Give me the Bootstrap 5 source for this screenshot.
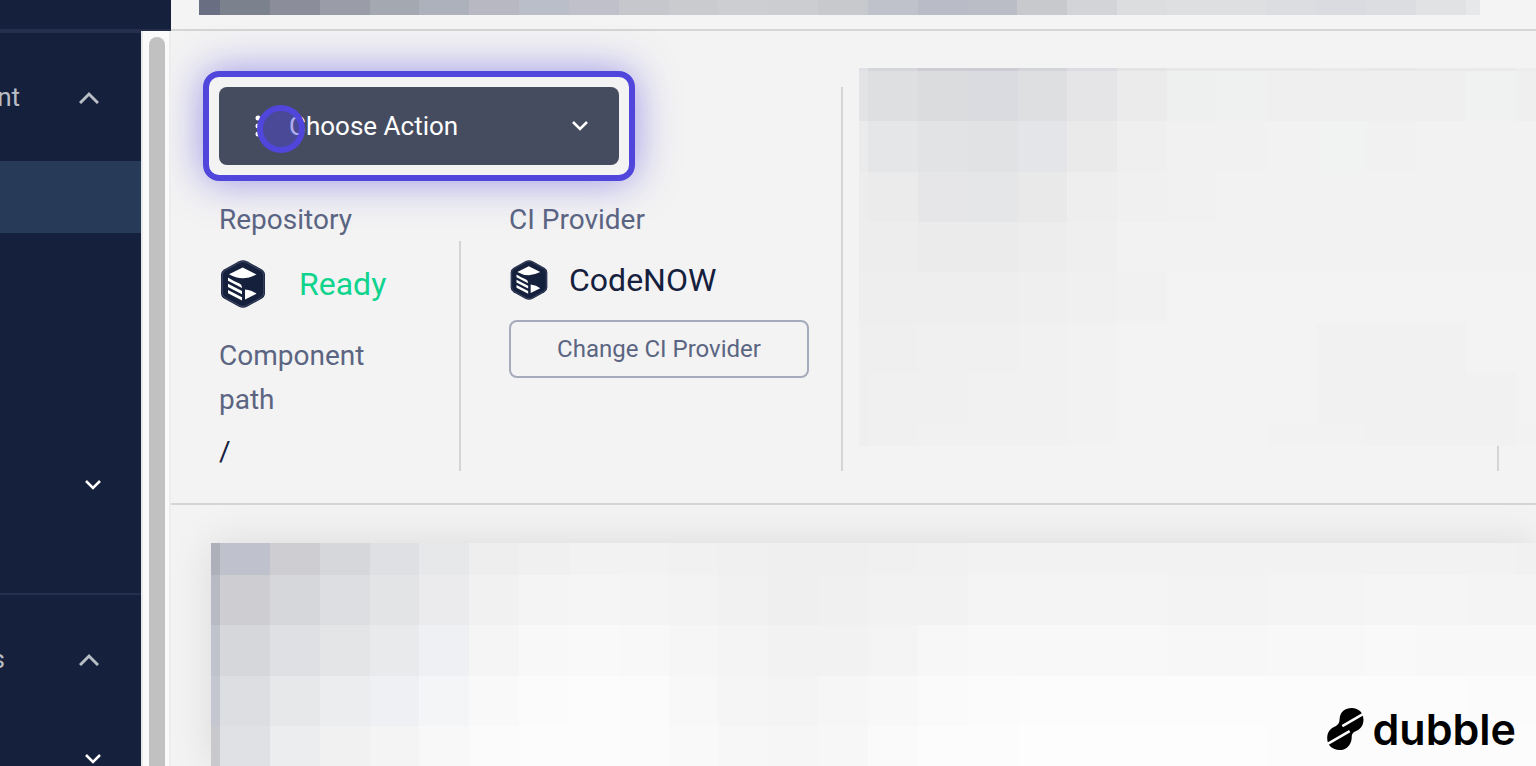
<!DOCTYPE html>
<html lang="en">
<head>
<meta charset="utf-8">
<meta name="viewport" content="width=device-width, initial-scale=1">
<title>CodeNOW component</title>
<link rel="stylesheet" href="https://cdn.jsdelivr.net/npm/bootstrap@5.3.0/dist/css/bootstrap.min.css">
<style>
:root { --navy: #15203d; --slate: #5b6582; --rule: #d4d4d4; --violet: #5046db; }
body { font-family: Roboto, "Liberation Sans", sans-serif; background: #f3f3f3; color: var(--navy); font-size: 28px; line-height: 44px; }
svg { display: block; flex: none; }

/* Sidebar */
.side { width: 171px; }
.side-head { height: 31px; background: var(--navy); border-bottom: 2px solid #252e4c; }
.side-nav { width: 141px; background: var(--navy); border-top: 2px solid #252e4c; font-size: 26px; color: #b9bec6; }
.side-nav a { height: 72px; color: #fff; padding-right: 40px; flex: none; }
.side-nav a.group { height: 128px; color: #b9bec6; padding-right: 42px; }
.side-nav a.current { background: #273b59; }
.side-nav hr { margin: 0; border-top: 2px solid #252e4c; opacity: 1; flex: none; }
.cut { width: 20px; display: flex; justify-content: flex-end; }
.cut.short { width: 5px; }
.track { width: 30px; background: #fafafa; border-left: 2px solid #e8e8e8; border-right: 2px solid #ededed; padding: 6px 4px 0 6px; }
.thumb { background: #c1c1c1; border-radius: 8px 8px 0 0; }

/* Main area */
.topbar { height: 31px; background: #f4f4f4; border-bottom: 2px solid #d4d6d4; padding: 0 56px 0 28px; }
.summary { height: 474px; border-bottom: 2px solid var(--rule); padding-left: 32px; flex: none; }
.left { width: 640px; margin-top: 40px; flex: none; }
.focus-frame { width: 432px; border: 6px solid var(--violet); border-radius: 16px; padding: 10px; box-shadow: 0 0 40px rgba(80, 70, 219, .55); }
.btn-action, .btn-action:hover { height: 78px; background: #464c5f; color: #fff; border: 0; border-radius: 8px; font-size: 26px; padding: 0 31px 0 36px; gap: 28px; }
.click-ring { top: 28px; left: 48px; width: 48px; height: 48px; border: 6px solid var(--violet); background: rgba(80, 70, 219, .45); }
.details { margin-top: 17px; padding-left: 16px; }
.field-name { color: var(--slate); }
.repo { width: 240px; }
.ci { width: 300px; margin-left: 48px; }
.v-rule { width: 2px; background: var(--rule); }
.v-rule.inner { margin-top: 43px; height: 230px; }
.v-rule.outer { margin-top: 56px; height: 384px; flex: none; margin-left: -2px; }
.value { font-size: 32px; height: 52px; }
.ci .value { height: 44px; margin-bottom: 18px; }
.ready { color: #10d48e; }
.btn-change, .btn-change:hover { height: 58px; border: 2px solid #a6abbb; border-radius: 8px; color: var(--slate); font-size: 24px; background: transparent; }
.panel { margin: 37px 0 0 16px; }
.stub { height: 25px; margin-right: 37px; border-right: 2px solid var(--rule); }

/* Redacted areas: a mosaic of flat tiles */
.mosaic { display: grid; }
.mosaic-title { grid-template-columns: 21px repeat(25, 1fr) 14px; height: 15px; }
.mosaic-panel { grid-template-columns: 9px repeat(13, 1fr) 20px; grid-template-rows: 3px 50px 51px 50px 50px 51px 50px 51px 22px; }
.mosaic-card { grid-template-columns: 9px repeat(26, 1fr) 20px; grid-template-rows: 32px 50px 51px 50px 1fr; margin: 38px 0 0 40px; box-shadow: 0 0 40px rgba(0, 0, 0, .1); }

.brand { right: 20px; bottom: 12px; color: #000; font: 600 43px/50px Inter, sans-serif; gap: 8px; }
</style>
</head>
<body class="vh-100 overflow-hidden">
<svg width="0" height="0" class="position-absolute" aria-hidden="true">
  <symbol id="cube" viewBox="0 0 44 48">
    <path d="M18 1.2Q22-.8 26 1.2L40.500 9.200Q44 11.300 44 15V33Q44 36.700 40.500 38.800L26 46.800Q22 48.800 18 46.800L3.500 38.800Q0 36.700 0 33V15Q0 11.300 3.500 9.200Z" fill="#15203d"/>
    <path d="M18.500 2.400Q22 .6 25.500 2.400L39.500 10.200Q42.800 12 42.800 15.500V32.500Q42.800 36 39.500 37.800L25.500 45.600Q22 47.400 18.500 45.600L4.500 37.800Q1.200 36 1.200 32.500V15.500Q1.200 12 4.500 10.200Z" fill="none" stroke="#6d7690" stroke-width=".5"/>
    <path d="M8 14.300 21.700 7.500 35.500 14.500Q28 18.300 21.700 18.300 15 18.300 8 14.300ZM7 17.500Q13 21.500 18 23.200 21 24.500 21 28L7 20.800ZM7 23.700 21 31V34.200L7 27ZM7 30 21 37.200V40.600L7 33.300ZM24 29.400Q31 30 35.500 33.800L24 39.600Z" fill="#fff"/>
  </symbol>
</svg>

<div class="d-flex h-100">
  <aside class="side d-flex flex-column flex-shrink-0">
    <div class="side-head flex-shrink-0"></div>
    <div class="d-flex flex-grow-1 overflow-hidden">
      <nav class="side-nav d-flex flex-column overflow-hidden" aria-label="Main">
        <a href="#" class="group d-flex align-items-center justify-content-between text-decoration-none"><span class="cut">nt</span><svg width="20" height="14" fill="none" stroke="currentColor" stroke-width="3"><path d="M1 13 10 4l9 9"/></svg></a>
        <a href="#" class="current" aria-label="Current page"></a>
        <a href="#" aria-label="Page"></a>
        <a href="#" aria-label="Page"></a>
        <a href="#" aria-label="Page"></a>
        <a href="#" class="d-flex align-items-center justify-content-end" aria-label="Expand"><svg width="16" height="10" fill="none" stroke="currentColor" stroke-width="2.500"><path d="m1 1 7 7 7-7"/></svg></a>
        <a href="#" aria-label="Page"></a>
        <hr>
        <a href="#" class="group d-flex align-items-center justify-content-between text-decoration-none"><span class="cut short">s</span><svg width="20" height="14" fill="none" stroke="currentColor" stroke-width="3"><path d="M1 13 10 4l9 9"/></svg></a>
        <a href="#" class="d-flex align-items-center justify-content-end" aria-label="Expand"><svg width="16" height="10" fill="none" stroke="currentColor" stroke-width="2.500"><path d="m1 1 7 7 7-7"/></svg></a>
      </nav>
      <div class="track"><div class="thumb h-100"></div></div>
    </div>
  </aside>

  <main class="d-flex flex-column flex-grow-1 overflow-hidden">
    <header class="topbar flex-shrink-0"><div class="mosaic mosaic-title" data-tiles="title"></div></header>

    <section class="summary d-flex">
      <div class="left">
        <div class="focus-frame position-relative">
          <button type="button" class="btn btn-action w-100 d-flex align-items-center">
            <svg width="6" height="22" fill="currentColor"><circle cx="3" cy="3" r="2.500"/><circle cx="3" cy="11" r="2.500"/><circle cx="3" cy="19" r="2.500"/></svg>
            <span>Choose Action</span>
            <svg class="ms-auto" width="16" height="10" fill="none" stroke="currentColor" stroke-width="2.500"><path d="m1 1 7 7 7-7"/></svg>
          </button>
          <span class="click-ring position-absolute rounded-circle"></span>
        </div>
        <div class="details d-flex">
          <div class="repo">
            <div class="field-name">Repository</div>
            <div class="value ready d-flex align-items-center mt-3"><svg class="me-4" width="48" height="48"><use href="#cube"/></svg><span class="ps-2">Ready</span></div>
            <div class="field-name w-75 mt-4">Component path</div>
            <div class="mt-2">/</div>
          </div>
          <div class="v-rule inner"></div>
          <div class="ci">
            <div class="field-name">CI Provider</div>
            <div class="value d-flex align-items-center mt-3"><svg width="40" height="40"><use href="#cube"/></svg><span class="ms-3 ps-1">CodeNOW</span></div>
            <button type="button" class="btn btn-change w-100">Change CI Provider</button>
          </div>
        </div>
      </div>
      <div class="v-rule outer"></div>
      <div class="panel flex-grow-1">
        <div class="mosaic mosaic-panel" data-tiles="panel"></div>
        <div class="stub"></div>
      </div>
    </section>

    <section class="mosaic mosaic-card flex-grow-1" data-tiles="card"></section>
  </main>
</div>

<div class="brand position-absolute d-flex align-items-center">
  <svg width="37" height="42" viewBox="50 39 109 125">
    <path d="M87 72C88 50 104 39 123 39 144 39 158 54 158 74 158 94 146 104 133 109 124 113 123 120 123 128 121 150 107 164 87 164 65 164 50 149 50 129 50 109 61 98 75 93 84 89 87 82 87 72Z"/>
    <path d="M95 93 164 53M44 150 117 108" fill="none" stroke="#fcfcfc" stroke-width="8"/>
  </svg>
  <span>dubble</span>
</div>

<script src="https://cdn.jsdelivr.net/npm/bootstrap@5.3.0/dist/js/bootstrap.bundle.min.js"></script>
<script>
// Tile colours, row by row; a two-digit value is a grey, "*n" repeats a tile.
const tiles = {
  title: "696e82 7b818d 8b8d9a 9a9ca8 a4a8b1 adb1bb b8b8c2 babec8 c0c0ca c6c7cc cacbcf cdced2 cccdd1 c8c9cd bfc2ca b9bcc6 babdc5 c8c9cd d3d4d8 dcddde dedfe1*2 dcdde1 dadbe0 dcdde1 e0e2e3 e7e8e9",
  panel: `dfdfe6 d5d5dc cdccd4*2 d3d3da dddce4 e4 e8*3 e9 e8 ea*2 ed
    e3e3e6 dedfe1 dbdcdd dadbe0 dedfe1 e5e5e8 eb eef0ef eef1ef ef*4 eff2f0 ef
    eb e5e6e8 e2e3e5 e1e2e4 e4e5e8 ea ef f1 f1 f2 f1f3f2 f1 f2*3
    ed eb e6e6e9 e4e6e8 e9 ee f0 f1 f2*7
    ed ed eb eb ed ef f2*9
    ee ee ee ee ef f0 f1 f3*8
    ef ef f0 f0 f1 f2 f3*4 f1*3 f3*2
    ef f0 f0 f1 f1 f2 f3*4 f1*4 f3
    ef f0 f1 f1 f1 f2 f3*3 f2*2 f1*3 f2`,
  card: `adb0b9 bfc2cc cdcdd2 d6d7da dfe0e4 e7e8ea ee f0 f2*2 f1 f0 ef*2 f0 f1 f2*11 f1
    b7bac3 cdcdd2 d6d7da dddee1 e3e4e6 ebebed f1 f4 f5 f4 f3 f1 ef f0 f2 f2 f4*4 f3*2 f4*2 f5*2 f4*2
    bfc3cc d6d7da dfe0e4 e4e5e7 e9eaec eff0f3 f5 f8 f9 f8 f6 f4 f2 f2 f4 f7 f8*4 f7*2 f8*2 f9 f8*3
    c4c7d0 dddee2 e7e8e9 ecedee eff0f3 f4f5f7 f9 fb fc fb f8 f5 f4 f6 f8 fa fb fc*9 fb*2
    c8c8cd e0e1e5 ecedee f1 f4 f8 fb fc fc fb f9 f7 f6 f7 fa fc*2 fd*5 fc*6`
};
document.querySelectorAll("[data-tiles]").forEach(box => {
  tiles[box.dataset.tiles].split(/\s+/).forEach(item => {
    const [c, n] = item.split("*");
    for (let i = 0; i < (n || 1); i++) {
      const tile = document.createElement("i");
      tile.style.background = "#" + (c.length === 2 ? c.repeat(3) : c);
      box.append(tile);
    }
  });
});
</script>
</body>
</html>
